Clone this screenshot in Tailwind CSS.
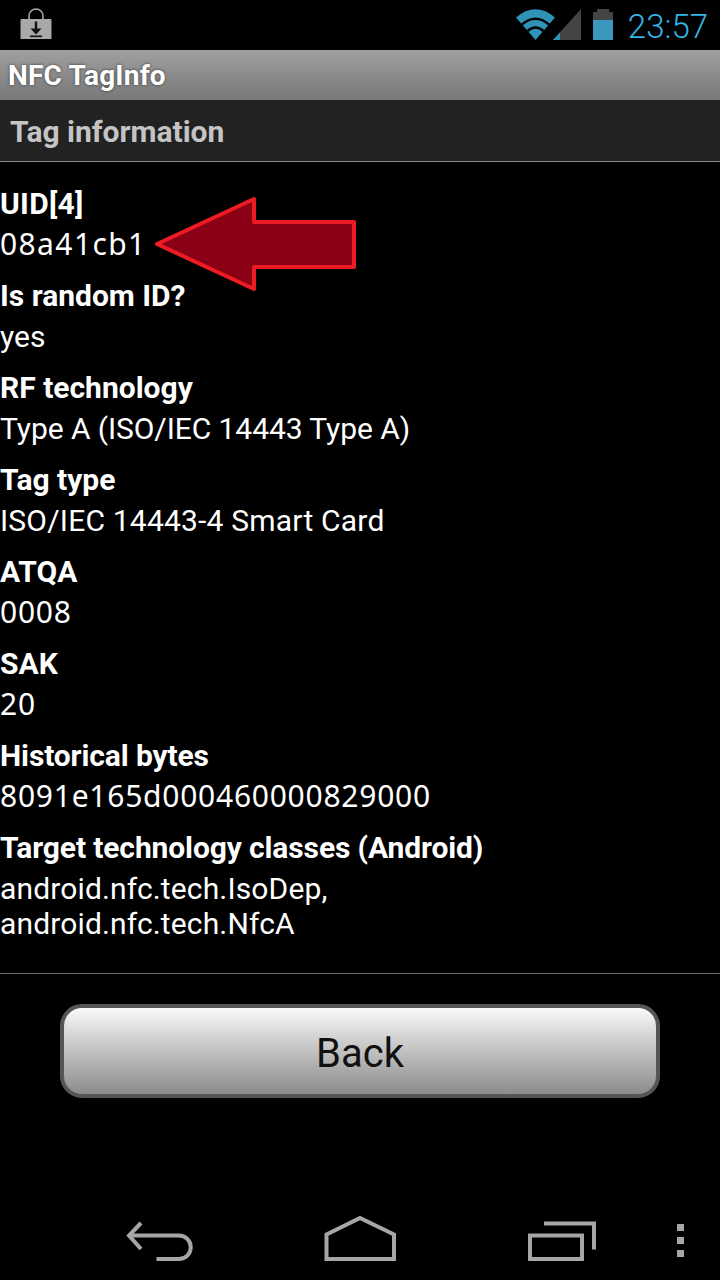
<!DOCTYPE html>
<html><head><meta charset="utf-8"><script src="https://cdn.jsdelivr.net/npm/@tailwindcss/browser@4"></script></head>
<body class="bg-black">
<div class="relative w-[720px] h-[1280px] bg-black overflow-hidden flex flex-col font-['Roboto',sans-serif] text-white">
  <!-- status bar -->
  <div class="h-[50px] flex items-center justify-between shrink-0">
    <svg width="40" height="34" viewBox="0 0 40 34" class="ml-[16px] mt-[-6px]">
      <rect x="4.500" y="14" width="31" height="24" rx="1" fill="#a8a8a8"/>
      <path d="M13 14 V11 a7 7 0 0 1 14 0 V14" fill="none" stroke="#a8a8a8" stroke-width="1.600"/>
      <path d="M20 16.500 V26" stroke="#111" stroke-width="2.400"/>
      <path d="M14.500 23.500 H25.500 L20 29.500 Z" fill="#111"/>
      <rect x="14" y="30.500" width="12" height="1.600" fill="#111"/>
    </svg>
    <div class="flex items-center mr-[12px]">
      <svg width="102" height="34" viewBox="0 0 102 34">
        <path d="M2 9.500 Q21.500 -7 41 9.500 L21.500 32 Z" fill="#2f93b8"/>
        <path d="M8 16.500 Q21.500 5 35 16.500" fill="none" stroke="#000" stroke-width="2.600"/>
        <path d="M13.500 23 Q21.500 16 29.500 23" fill="none" stroke="#000" stroke-width="2.600"/>
        <path d="M39 32 L67 1 V32 Z" fill="#444444"/>
        <path d="M39 32 L46 24.500 V32 Z" fill="#2f93b8"/>
        <path d="M83 1 H95 V4 H99 V12 H79 V4 H83 Z" fill="#444444"/>
        <rect x="79" y="12" width="20" height="20" fill="#3a98bf"/>
      </svg>
      <span class="ml-[12px] text-[33px] leading-none font-light text-[#33b5e5] mt-[2px]">23:57</span>
    </div>
  </div>
  <!-- action bar -->
  <div class="h-[50px] shrink-0 flex items-center px-[8px] pt-[1px] bg-gradient-to-b from-[#a0a0a0] to-[#787878]">
    <span class="text-[28px] font-bold tracking-[0.2px] text-white [text-shadow:0_0_3px_#333]">NFC TagInfo</span>
  </div>
  <!-- section header -->
  <div class="h-[62px] shrink-0 flex items-center px-[10px] pt-[2px] bg-[#222222] border-b border-[#888888]">
    <span class="text-[30px] font-bold text-[#c4c4c4]">Tag information</span>
  </div>
  <!-- rows -->
  <div class="pt-[24px] flex flex-col gap-[16px] h-[812px] border-b border-[#666666] shrink-0">
    <div class="flex flex-col">
      <span class="text-[30px] leading-[36px] font-bold tracking-[0.3px]">UID[4]</span>
      <span class="text-[30px] leading-[36px] mt-[4px] font-['Noto_Sans',sans-serif] tracking-[1.4px]">08a41cb1</span>
    </div>
    <div class="flex flex-col">
      <span class="text-[30px] leading-[36px] font-bold">Is random ID?</span>
      <span class="text-[30px] leading-[36px] mt-[5px] mb-[-1px]">yes</span>
    </div>
    <div class="flex flex-col">
      <span class="text-[30px] leading-[36px] font-bold">RF technology</span>
      <span class="text-[30px] leading-[36px] mt-[5px] mb-[-1px] tracking-[-0.07px]">Type A (ISO/IEC 14443 Type A)</span>
    </div>
    <div class="flex flex-col">
      <span class="text-[30px] leading-[36px] font-bold">Tag type</span>
      <span class="text-[30px] leading-[36px] mt-[5px] mb-[-1px] tracking-[0.2px]">ISO/IEC 14443-4 Smart Card</span>
    </div>
    <div class="flex flex-col">
      <span class="text-[30px] leading-[36px] font-bold">ATQA</span>
      <span class="text-[30px] leading-[36px] mt-[4px] font-['Noto_Sans',sans-serif] tracking-[0.75px]">0008</span>
    </div>
    <div class="flex flex-col">
      <span class="text-[30px] leading-[36px] font-bold">SAK</span>
      <span class="text-[30px] leading-[36px] mt-[4px] font-['Noto_Sans',sans-serif] tracking-[0.75px]">20</span>
    </div>
    <div class="flex flex-col">
      <span class="text-[30px] leading-[36px] font-bold tracking-[-0.12px]">Historical bytes</span>
      <span class="text-[30px] leading-[36px] mt-[4px] font-['Noto_Sans',sans-serif] tracking-[0.75px]">8091e165d000460000829000</span>
    </div>
    <div class="flex flex-col">
      <span class="text-[30px] leading-[36px] font-bold tracking-[-0.12px]">Target technology classes (Android)</span>
      <span class="text-[30px] leading-[35px] mt-[5px] tracking-[0.14px]">android.nfc.tech.IsoDep,<br>android.nfc.tech.NfcA</span>
    </div>
  </div>
  <!-- button -->
  <div class="pt-[30px] flex justify-center">
    <button class="w-[600px] h-[94px] rounded-[22px] border-4 border-[#555555] bg-gradient-to-b from-[#fafafa] to-[#8c8c8c] text-[40px] pt-[6px] text-[#111111] flex items-center justify-center">Back</button>
  </div>
  <!-- arrow overlay -->
  <svg class="absolute left-[150px] top-[194px]" width="210" height="102" viewBox="0 0 210 102">
    <path d="M7 50 L104 5 V28 H204 V73 H104 V95 Z" fill="#8a0014" stroke="#ed1c24" stroke-width="4" stroke-linejoin="round"/>
  </svg>
  <!-- nav bar overlay -->
  <svg class="absolute left-[100px] top-[1200px]" width="620" height="80" viewBox="0 0 620 80" fill="none" stroke="#a6a6a6" stroke-width="4">
    <path d="M41 23 L29 35.500 L41 49 M29 35.500 H79 A11.700 11.700 0 0 1 79 59 H56.500"/>
    <path d="M226.500 59 V34.500 L260 18 L294 34.500 V59 Z"/>
    <path d="M430 59 V35.500 H482 V59 Z"/>
    <path d="M444 23.500 H494 V49.500"/>
    <g fill="#a6a6a6" stroke="none">
      <rect x="577" y="24" width="7" height="7"/>
      <rect x="577" y="37" width="7" height="7"/>
      <rect x="577" y="50" width="7" height="7"/>
    </g>
  </svg>
</div>
</body></html>
